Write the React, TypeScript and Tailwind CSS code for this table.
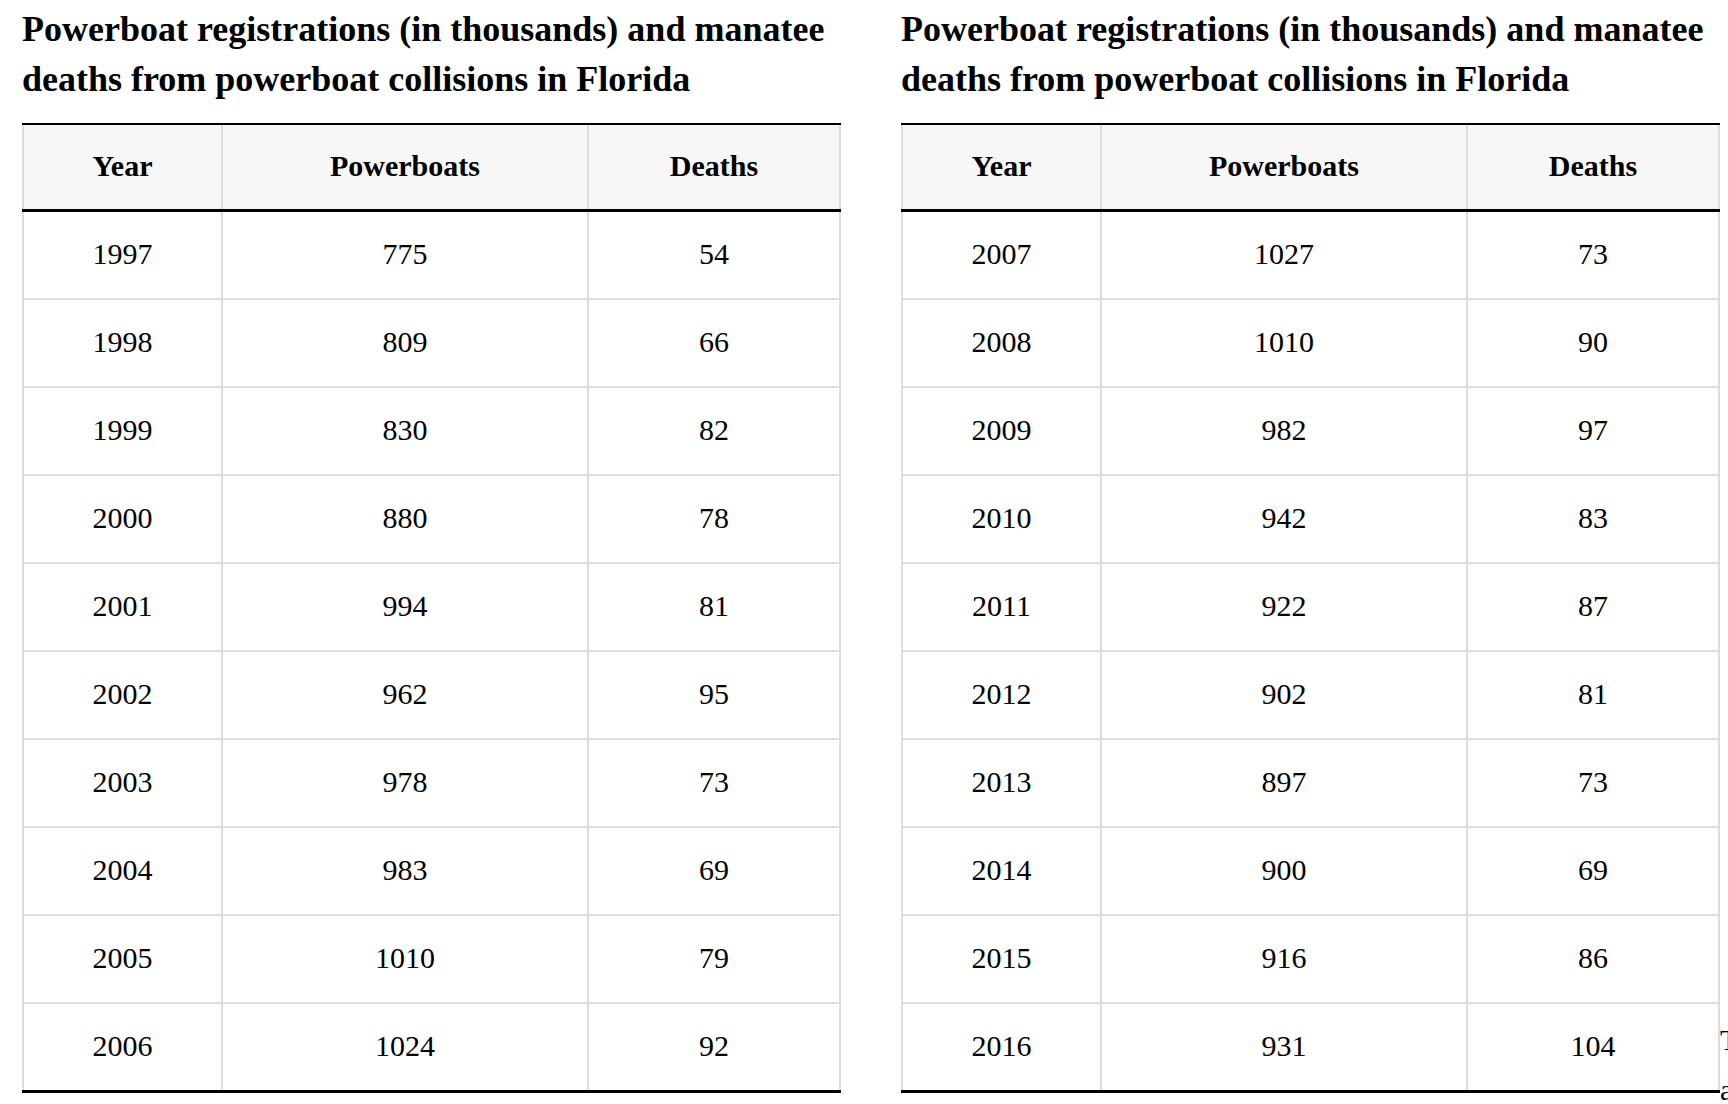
const leftRows = [
  ["1997", "775", "54"],
  ["1998", "809", "66"],
  ["1999", "830", "82"],
  ["2000", "880", "78"],
  ["2001", "994", "81"],
  ["2002", "962", "95"],
  ["2003", "978", "73"],
  ["2004", "983", "69"],
  ["2005", "1010", "79"],
  ["2006", "1024", "92"],
];

const rightRows = [
  ["2007", "1027", "73"],
  ["2008", "1010", "90"],
  ["2009", "982", "97"],
  ["2010", "942", "83"],
  ["2011", "922", "87"],
  ["2012", "902", "81"],
  ["2013", "897", "73"],
  ["2014", "900", "69"],
  ["2015", "916", "86"],
  ["2016", "931", "104"],
];

const DataTable = ({ rows }: { rows: string[][] }) => {
  return (
    <div className="w-[819px] border-t-2 border-b-[3px] border-black">
      {/* header */}
      <div className="grid grid-cols-[199px_366px_254px] border-b-[3px] border-black bg-[#f7f7f7]">
        <div className="h-[84px] pb-1 flex items-center justify-center border-l-2 border-[#dddddd] font-bold text-[30px]">
          Year
        </div>
        <div className="h-[84px] pb-1 flex items-center justify-center border-l-2 border-[#dddddd] font-bold text-[30px]">
          Powerboats
        </div>
        <div className="h-[84px] pb-1 flex items-center justify-center border-l-2 border-r-2 border-[#dddddd] font-bold text-[30px]">
          Deaths
        </div>
      </div>
      {rows.map((r, i) => (
        <div
          key={r[0]}
          className={
            i === rows.length - 1
              ? "grid grid-cols-[199px_366px_254px]"
              : "grid grid-cols-[199px_366px_254px] border-b-2 border-[#dddddd]"
          }
        >
          <div className="h-[86px] pb-1 flex items-center justify-center border-l-2 border-[#dddddd] text-[30px]">
            {r[0]}
          </div>
          <div className="h-[86px] pb-1 flex items-center justify-center border-l-2 border-[#dddddd] text-[30px]">
            {r[1]}
          </div>
          <div className="h-[86px] pb-1 flex items-center justify-center border-l-2 border-r-2 border-[#dddddd] text-[30px]">
            {r[2]}
          </div>
        </div>
      ))}
    </div>
  );
};

const Block = ({ rows }: { rows: string[][] }) => (
  <div className="shrink-0 w-[819px]">
    <h2 className="font-bold text-[36px] leading-[50px] mb-[19px]">
      Powerboat registrations (in thousands) and manatee deaths from powerboat collisions in Florida
    </h2>
    <DataTable rows={rows} />
  </div>
);

export default function App() {
  return (
    <div
      className="h-screen w-full overflow-hidden bg-white text-black"
      style={{ fontFamily: '"Liberation Serif", "Times New Roman", serif' }}
    >
      <div className="flex items-start gap-[60px] pl-[22px] pt-[4px]">
        <Block rows={leftRows} />
        <Block rows={rightRows} />
        <p className="shrink-0 w-[420px] -ml-[60px] pt-[1011px] text-[30px] leading-[50px]">
          The number of registrations
          <br />
          and deaths both rose over time.
        </p>
      </div>
    </div>
  );
}
